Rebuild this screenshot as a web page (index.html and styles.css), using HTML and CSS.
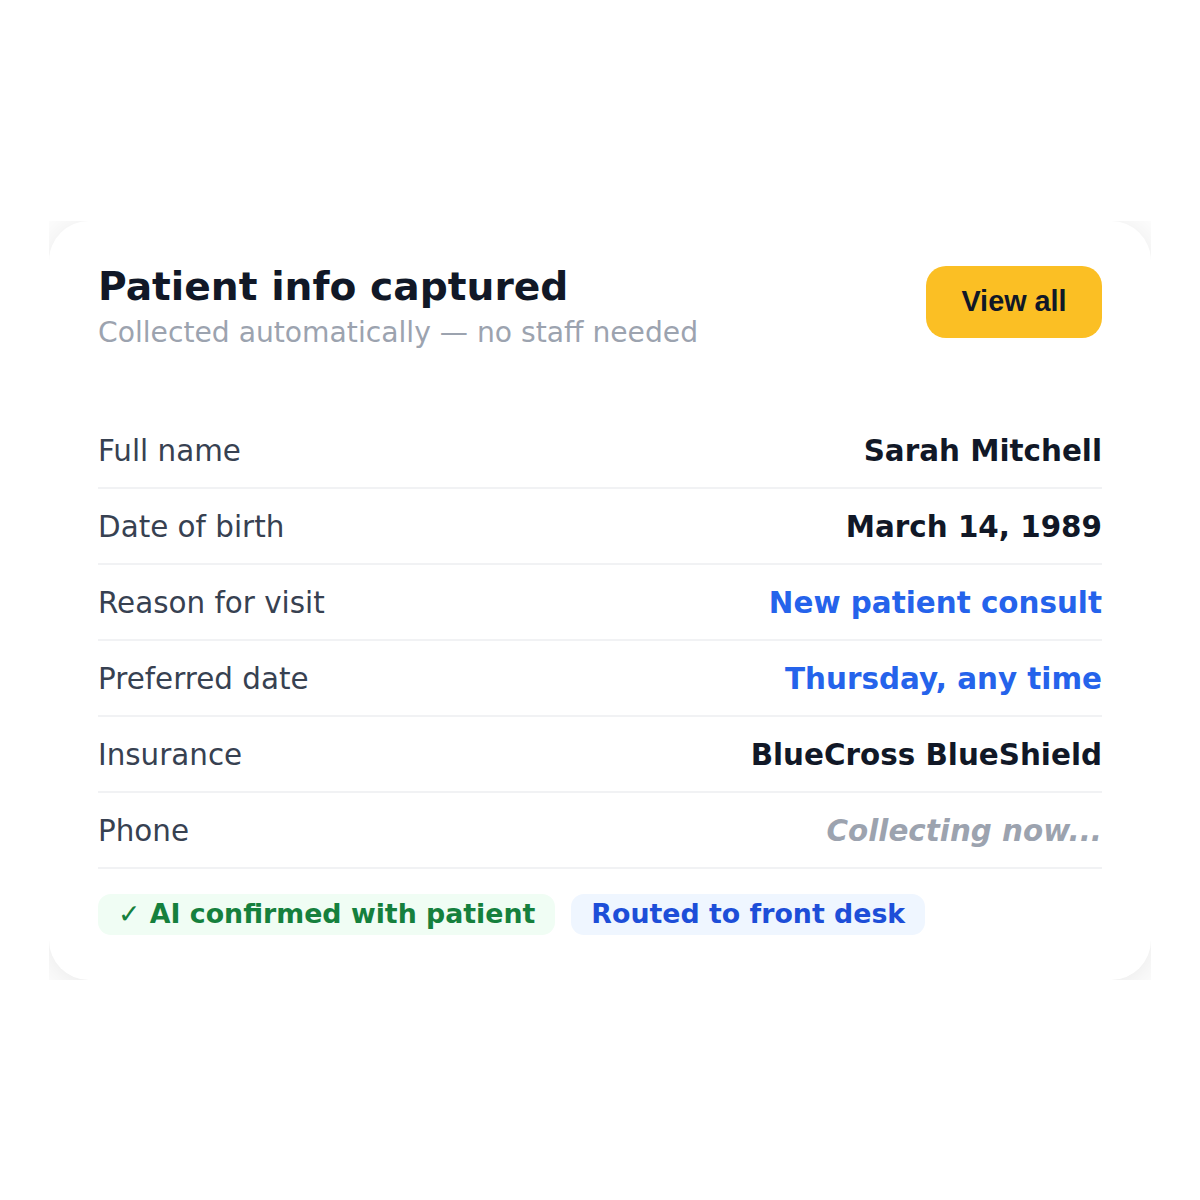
FILE: index.html
```html
<!DOCTYPE html>
<html>
<head>
<meta charset="utf-8">
<link rel="stylesheet" href="styles.css">
</head>
<body>
<div class="stage">
  <div class="frame">
    <div class="card">
      <div class="header">
        <div class="titles">
          <h1 class="title">Patient info captured</h1>
          <p class="subtitle">Collected automatically — no staff needed</p>
        </div>
        <button class="btn">View all</button>
      </div>
      <div class="rows">
        <div class="row"><span class="label">Full name</span><span class="value">Sarah Mitchell</span></div>
        <div class="row"><span class="label">Date of birth</span><span class="value">March 14, 1989</span></div>
        <div class="row"><span class="label">Reason for visit</span><span class="value blue">New patient consult</span></div>
        <div class="row"><span class="label">Preferred date</span><span class="value blue">Thursday, any time</span></div>
        <div class="row"><span class="label">Insurance</span><span class="value">BlueCross BlueShield</span></div>
        <div class="row"><span class="label">Phone</span><span class="value pending">Collecting now...</span></div>
      </div>
      <div class="badges">
        <span class="badge green">✓ AI confirmed with patient</span>
        <span class="badge bluebadge">Routed to front desk</span>
      </div>
    </div>
  </div>
</div>
</body>
</html>
```
FILE: styles.css
```css
html, body {
  margin: 0;
  padding: 0;
  background: #ffffff;
}
body {
  font-family: "DejaVu Sans", sans-serif;
}
.stage {
  width: 1200px;
  height: 1200px;
  display: flex;
  align-items: center;
  justify-content: center;
}
.frame {
  width: 1102px;
  height: 759px;
  overflow: hidden;
}
.card {
  box-sizing: border-box;
  width: 1102px;
  height: 759px;
  background: #ffffff;
  border-radius: 40px;
  box-shadow: 0 4px 40px rgba(0, 0, 0, 0.11);
  padding: 42px 49px 44px 49px;
}
.header {
  display: flex;
  justify-content: space-between;
  align-items: flex-start;
}
.title {
  margin: 0;
  font-size: 39.2px;
  line-height: 48px;
  font-weight: bold;
  color: #111827;
}
.subtitle {
  margin: 4px 0 0;
  font-size: 28.2px;
  line-height: 36px;
  color: #9ca3af;
}
.btn {
  margin-top: 3px;
  width: 176px;
  height: 72px;
  border: none;
  border-radius: 20px;
  background: #fbbf24;
  color: #111827;
  font-family: "Liberation Sans", Arial, sans-serif;
  font-weight: bold;
  font-size: 28.8px;
}
.rows {
  margin-top: 62px;
}
.row {
  height: 76px;
  box-sizing: border-box;
  border-bottom: 2px solid #f1f2f4;
  display: flex;
  justify-content: space-between;
  align-items: center;
  padding-top: 2px;
}
.label {
  font-size: 29.4px;
  color: #374151;
}
.value {
  font-size: 29.4px;
  font-weight: bold;
  color: #111827;
}
.value.blue {
  color: #2563eb;
}
.value.pending {
  color: #9ca3af;
  font-style: italic;
}
.badges {
  margin-top: 25px;
  display: flex;
  gap: 16px;
}
.badge {
  height: 41px;
  box-sizing: border-box;
  padding: 0 20px 2px;
  border-radius: 13px;
  display: flex;
  align-items: center;
  font-size: 26.8px;
  font-weight: bold;
}
.badge.green {
  background: #f0fdf4;
  color: #15803d;
}
.badge.bluebadge {
  background: #eff6ff;
  color: #1d4ed8;
}
```
